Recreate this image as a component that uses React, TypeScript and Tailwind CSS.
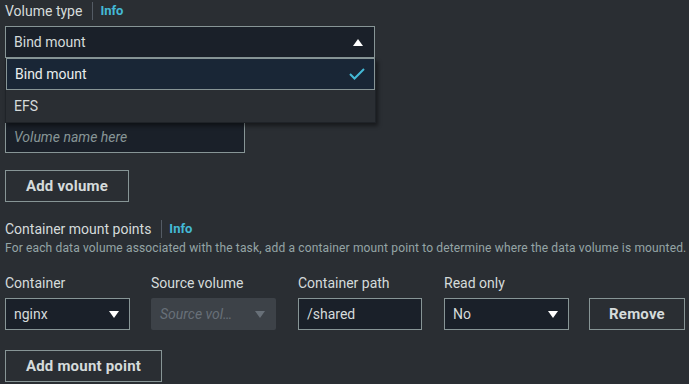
import React from "react";

const font = "font-['Roboto','Liberation_Sans',sans-serif]";

function Caret({ up = false, disabled = false }: { up?: boolean; disabled?: boolean }) {
  return (
    <svg width="10" height="7" viewBox="0 0 10 7" className="shrink-0">
      <polygon
        points={up ? "5,0 10,7 0,7" : "0,0 10,0 5,7"}
        fill={disabled ? "#687078" : "#ffffff"}
      />
    </svg>
  );
}

function FieldLabel({ text, info }: { text: string; info?: boolean }) {
  return (
    <div className="flex h-[22px] items-center text-[14px] text-[#d5dbdb]">
      <span>{text}</span>
      {info && (
        <>
          <span className="ml-[10px] mr-[7px] h-[18px] w-px bg-[#545b64]"></span>
          <span className="text-[13px] font-bold text-[#44b9d6]">Info</span>
        </>
      )}
    </div>
  );
}

function SelectBox({ value, width }: { value: string; width: string }) {
  return (
    <div
      className={`flex h-[32px] ${width} items-center justify-between border border-[#879596] bg-[#1a2029] pl-[8px] pr-[10px] text-[14px] text-[#d5dbdb]`}
    >
      <span>{value}</span>
      <Caret />
    </div>
  );
}

function OutlineButton({ label, width }: { label: string; width: string }) {
  return (
    <button
      className={`flex h-[32px] ${width} items-center justify-center border border-[#879596] text-[15px] font-bold tracking-[0.2px] text-[#d5dbdb]`}
    >
      {label}
    </button>
  );
}

export default function App() {
  return (
    <div className={`relative h-[384px] w-[689px] overflow-hidden bg-[#2a2e33] pl-[5px] ${font}`}>
      {/* Volume type */}
      <section className="relative z-10">
        <FieldLabel text="Volume type" info />
        <div className="relative mt-[4px] w-[370px]">
          <div className="flex h-[32px] items-center justify-between border border-[#879596] bg-[#1a2029] pl-[8px] pr-[11px] text-[14px] text-[#d5dbdb]">
            <span>Bind mount</span>
            <Caret up />
          </div>

          {/* Open dropdown */}
          <div className="absolute left-0 top-[32px] w-[371px] border-x border-b border-[#1f2328] bg-[#2a2e33] shadow-[2px_3px_4px_rgba(0,0,0,0.45)]">
            <div className="flex h-[32px] items-center justify-between border border-[#879596] bg-[#192636] pl-[8px] pr-[9px] text-[14px] text-[#eaeded]">
              <span>Bind mount</span>
              <svg width="16" height="12" viewBox="0 0 16 12">
                <polyline points="1,6 5.5,10.5 15,1" fill="none" stroke="#44b9d6" strokeWidth="2" />
              </svg>
            </div>
            <div className="flex h-[32px] items-center pl-[8px] text-[14px] text-[#d5dbdb]">EFS</div>
          </div>
        </div>
      </section>

      {/* Volume name (label hidden under the open menu) */}
      <section className="mt-[37px]">
        <div className="h-[22px]"></div>
        <div className="mt-[4px] flex h-[32px] w-[240px] items-center border border-[#879596] bg-[#1a2029] pl-[8px] text-[14px] italic text-[#879596]">
          Volume name here
        </div>
      </section>

      <div className="mt-[17px]">
        <OutlineButton label="Add volume" width="w-[124px]" />
      </div>

      {/* Container mount points */}
      <section className="mt-[16px]">
        <FieldLabel text="Container mount points" info />
        <p className="h-[16px] whitespace-nowrap text-[12px] leading-[16px] tracking-[0.15px] text-[#95a5a6]">
          For each data volume associated with the task, add a container mount point to determine where the data volume is mounted.
        </p>
      </section>

      <div className="mt-[16px] flex">
        <div className="w-[125px]">
          <FieldLabel text="Container" />
          <div className="mt-[4px]">
            <SelectBox value="nginx" width="w-[125px]" />
          </div>
        </div>
        <div className="ml-[21px] w-[125px]">
          <FieldLabel text="Source volume" />
          <div className="mt-[4px] flex h-[32px] items-center justify-between rounded-[2px] bg-[#3d4248] pl-[9px] pr-[11px] text-[14px] italic text-[#687078]">
            <span>Source vol…</span>
            <Caret disabled />
          </div>
        </div>
        <div className="ml-[22px] w-[124px]">
          <FieldLabel text="Container path" />
          <div className="mt-[4px] flex h-[32px] items-center border border-[#879596] bg-[#1a2029] pl-[8px] text-[14px] text-[#d5dbdb]">
            /shared
          </div>
        </div>
        <div className="ml-[22px] w-[125px]">
          <FieldLabel text="Read only" />
          <div className="mt-[4px]">
            <SelectBox value="No" width="w-[125px]" />
          </div>
        </div>
        <div className="ml-[20px] pt-[26px]">
          <OutlineButton label="Remove" width="w-[96px]" />
        </div>
      </div>

      <div className="mt-[20px]">
        <OutlineButton label="Add mount point" width="w-[157px]" />
      </div>
    </div>
  );
}
